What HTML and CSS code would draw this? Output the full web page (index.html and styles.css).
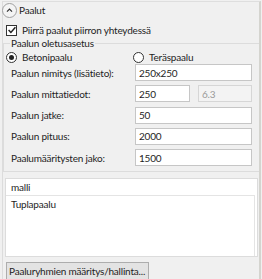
FILE: index.html
```html
<!DOCTYPE html>
<html>
<head>
    <link rel="stylesheet" href="styles.css">
</head>
<body>
    <div class="panel">
        <div class="header">
            <span class="toggle">
                <svg width="15" height="15" viewBox="0 0 15 15">
                    <circle cx="7.5" cy="7.5" r="7" fill="#f4f4f4" stroke="#a0a0a0"/>
                    <path d="M5 8.7 L7.5 6.2 L10 8.7" fill="none" stroke="#333" stroke-width="1.2"/>
                </svg>
            </span>
            <span>Paalut</span>
        </div>
        <label class="check">
            <span class="box">
                <svg width="10" height="10" viewBox="0 0 10 10">
                    <path d="M1.6 5 L3.9 7.4 L8.4 2.3" fill="none" stroke="#222" stroke-width="1.5"/>
                </svg>
            </span>
            Piirrä paalut piirron yhteydessä
        </label>
        <fieldset class="group">
            <legend>Paalun oletusasetus</legend>
            <div class="radios">
                <label class="radio"><span class="dot on"></span>Betonipaalu</label>
                <label class="radio"><span class="dot"></span>Teräspaalu</label>
            </div>
            <div class="form">
                <span class="lbl">Paalun nimitys (lisätieto):</span>
                <input class="field" value="250x250">

                <span class="lbl">Paalun mittatiedot:</span>
                <div class="pair">
                    <input class="field" value="250">
                    <input class="field" value="6.3" disabled>
                </div>

                <span class="lbl">Paalun jatke:</span>
                <input class="field" value="50">

                <span class="lbl">Paalun pituus:</span>
                <input class="field" value="2000">

                <span class="lbl">Paalumääritysten jako:</span>
                <input class="field" value="1500">
            </div>
        </fieldset>
        <div class="list">
            <div class="item">malli</div>
            <div class="sub">
                <div class="item">Tuplapaalu</div>
            </div>
        </div>
        <button class="action">Paaluryhmien määritys/hallinta...</button>
    </div>
</body>
</html>
```

FILE: styles.css
```css
body {
    margin: 0;
    background-color: #f0f0f0;
    font-family: 'Lato', sans-serif;
    font-size: 10px;
    letter-spacing: -0.2px;
    color: #1e1e1e;
    overflow: hidden;
}

.panel {
    width: 256px;
    height: 290px;
    margin: 1px 0 0 2px;
    border-top: 1px solid #dedede;
    border-left: 1px solid #dcdcdc;
    border-right: 2px solid #d4d4cf;
    display: flex;
    flex-direction: column;
}

.header {
    display: flex;
    align-items: center;
    height: 16px;
}

.toggle {
    display: flex;
    margin: 0 2px 0 -1px;
}

.check {
    display: flex;
    align-items: center;
    height: 14px;
    margin: 5px 0 0 3px;
}

.box {
    width: 11px;
    height: 11px;
    border: 1px solid #333;
    background-color: #fff;
    margin-right: 5px;
    display: flex;
    box-sizing: border-box;
    align-items: center;
    justify-content: center;
}

.box svg {
    flex-shrink: 0;
}

.group {
    margin: 0;
    padding: 0 7px 5px 7px;
    border: 1px solid #dcdcdc;
    border-right: none;
    min-width: 0;
}

.group legend {
    padding: 0 1px;
    margin-left: -1px;
    line-height: 13px;
}

.radios {
    display: grid;
    grid-template-columns: 122px 1fr;
    height: 14px;
    align-items: center;
}

.radio {
    display: flex;
    align-items: center;
    margin-left: -5px;
}

.radio + .radio {
    margin-left: 0;
}

.dot {
    width: 11px;
    height: 11px;
    border: 1px solid #333;
    border-radius: 50%;
    background-color: #fff;
    box-sizing: border-box;
    margin-right: 5px;
    position: relative;
}

.dot.on::after {
    content: "";
    position: absolute;
    left: 2px;
    top: 2px;
    width: 5px;
    height: 5px;
    border-radius: 50%;
    background-color: #222;
}

.form {
    display: grid;
    grid-template-columns: 124px 1fr;
    grid-auto-rows: 17px;
    row-gap: 4.25px;
    align-items: center;
}

.field {
    height: 17px;
    box-sizing: border-box;
    width: 100%;
    border: 1px solid #c6c6c6;
    background-color: #fff;
    padding: 0 3px;
    font: inherit;
    letter-spacing: inherit;
    color: #1e1e1e;
}

.field:disabled {
    background-color: #f3f3f3;
    border-color: #d6d6d6;
    color: #9a9a9a;
}

.pair {
    display: grid;
    grid-template-columns: 55px 1fr;
    column-gap: 8px;
}

.list {
    margin: 6px 1px 0 2px;
    height: 79px;
    box-sizing: border-box;
    border: 1px solid #dcdcdc;
    background-color: #fff;
    display: flex;
    flex-direction: column;
}

.item {
    height: 16px;
    line-height: 16px;
    padding-left: 5px;
}

.sub {
    flex: 1;
    border-top: 1px solid #e4e4e4;
    border-right: 1px solid #e4e4e4;
    margin-right: 2px;
}

.action {
    align-self: flex-start;
    width: 143px;
    margin: 5px 0 0 3px;
    height: 18px;
    padding: 0 2px;
    text-align: left;
    white-space: nowrap;
    font: inherit;
    letter-spacing: inherit;
    color: #1e1e1e;
    background-color: #e3e3e3;
    border: 1px solid #adadad;
}
```
